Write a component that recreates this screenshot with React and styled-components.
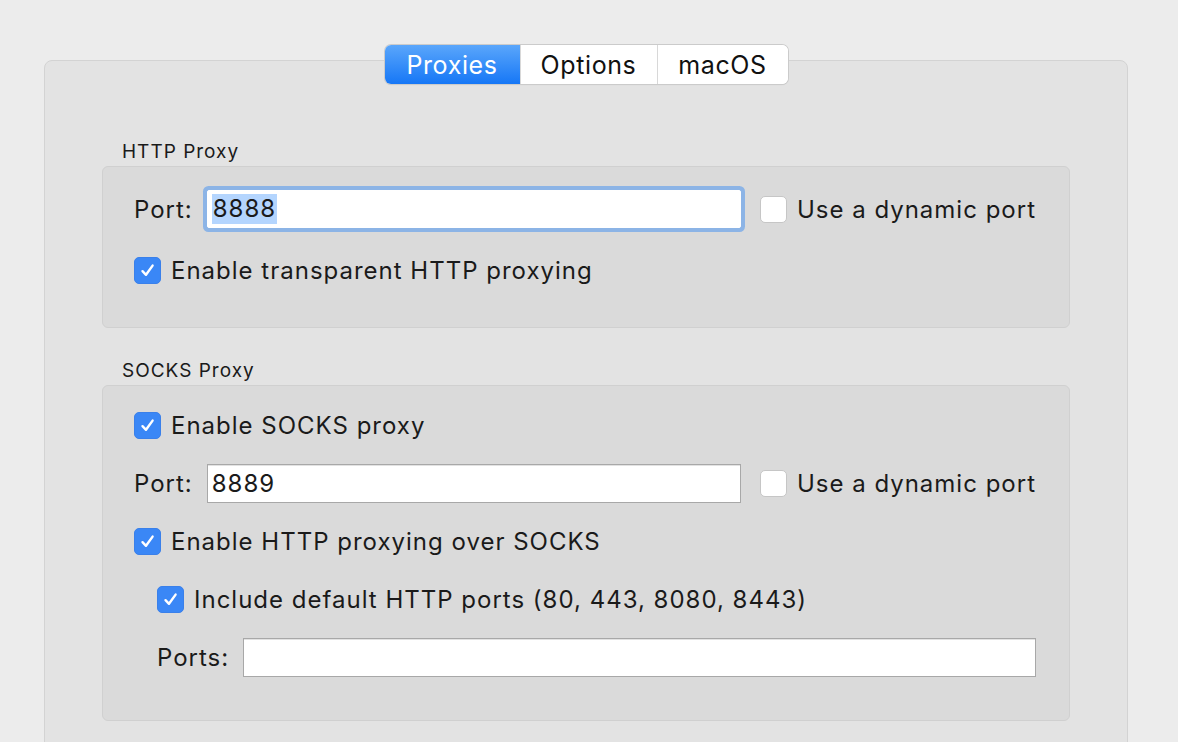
import styled, { createGlobalStyle } from "styled-components";

const GlobalStyle = createGlobalStyle`
  html, body {
    margin: 0;
    padding: 0;
    background: #ececec;
    font-family: Inter, "Noto Sans", "Liberation Sans", sans-serif;
    color: #1a1a1a;
  }
`;

const Page = styled.div`
  width: 1178px;
  height: 742px;
  overflow: hidden;
  padding: 45px 50px 0 44px;
  box-sizing: border-box;
`;

const TabBar = styled.div`
  display: flex;
  justify-content: center;
  width: 1084px;
  position: relative;
  z-index: 1;
  margin-bottom: -24px;
`;

const Segments = styled.div`
  display: flex;
  height: 39px;
  border-radius: 6px;
  background: #fff;
  box-shadow: 0 0 0 1px #cbcbcb, 0 1px 1px rgba(0, 0, 0, 0.12);
  overflow: hidden;
`;

const Segment = styled.div`
  display: flex;
  align-items: center;
  justify-content: center;
  width: ${(p) => p.$w}px;
  font-size: 25px;
  letter-spacing: 0.6px;
  color: ${(p) => (p.$active ? "#fff" : "#111")};
  background: ${(p) =>
    p.$active ? "linear-gradient(#5aa6fb, #1677f6)" : "#fff"};
  & + & {
    border-left: 1px solid #d8d8d8;
  }
`;

const Panel = styled.div`
  width: 1084px;
  height: 720px;
  box-sizing: border-box;
  background: #e3e3e3;
  border: 1px solid #d3d3d3;
  border-radius: 8px;
  padding: 79px 57px 0 57px;
`;

const SectionLabel = styled.div`
  font-size: 19px;
  letter-spacing: 1px;
  line-height: 24px;
  padding-left: 20px;
  margin-bottom: 2px;
`;

const GroupBox = styled.div`
  display: flex;
  flex-direction: column;
  gap: ${(p) => p.$gap}px;
  background: #dadada;
  border: 1px solid #d0d0d0;
  border-radius: 6px;
  padding: ${(p) => p.$top}px 33px ${(p) => p.$bottom}px 31px;
  margin-bottom: ${(p) => p.$mb || 0}px;
`;

const Row = styled.div`
  display: flex;
  align-items: center;
  height: 40px;
  padding-left: ${(p) => p.$indent || 0}px;
`;

const FieldLabel = styled.span`
  font-size: 24px;
  letter-spacing: 1px;
  margin-right: ${(p) => p.$gap}px;
  white-space: nowrap;
`;

const TextField = styled.div`
  flex: 1;
  height: ${(p) => (p.$focused ? 38 : 39)}px;
  box-sizing: border-box;
  background: #fff;
  border: 1px solid ${(p) => (p.$focused ? "#fff" : "#a8a8a8")};
  border-radius: ${(p) => (p.$focused ? "2px" : "0")};
  box-shadow: ${(p) =>
    p.$focused ? "0 0 0 4px #8cb4e6" : "inset 0 1px 0 #e2e2e2"};
  display: flex;
  align-items: center;
  padding-left: 4px;
  font-size: 24px;
  letter-spacing: 1px;
`;

const Selected = styled.span`
  background: #b4d5fe;
  padding: 0 1px;
  line-height: 30px;
`;

const CheckRow = styled.label`
  display: flex;
  align-items: center;
  font-size: 24px;
  letter-spacing: 1px;
  white-space: nowrap;
  margin-left: ${(p) => p.$ml || 0}px;
`;

const Box = styled.span`
  width: 27px;
  height: 27px;
  box-sizing: border-box;
  border-radius: 5px;
  margin-right: 10px;
  display: flex;
  align-items: center;
  justify-content: center;
  background: ${(p) => (p.$checked ? "#3a87f6" : "#fff")};
  border: 1px solid ${(p) => (p.$checked ? "#3a80ea" : "#c6c6c6")};
`;

function Check({ checked, children, ml }) {
  return (
    <CheckRow $ml={ml}>
      <Box $checked={checked}>
        {checked && (
          <svg width="17" height="17" viewBox="0 0 17 17">
            <path
              d="M3.5 9.2 L7 12.8 L13.6 3.6"
              fill="none"
              stroke="#fff"
              strokeWidth="2.4"
              strokeLinecap="round"
              strokeLinejoin="round"
            />
          </svg>
        )}
      </Box>
      {children}
    </CheckRow>
  );
}

export default function App() {
  return (
    <>
      <GlobalStyle />
      <Page>
        <TabBar>
          <Segments>
            <Segment $active $w={135}>Proxies</Segment>
            <Segment $w={136}>Options</Segment>
            <Segment $w={130}>macOS</Segment>
          </Segments>
        </TabBar>
        <Panel>
          <SectionLabel>HTTP Proxy</SectionLabel>
          <GroupBox $top={22} $bottom={37} $gap={21} $mb={31}>
            <Row>
              <FieldLabel $gap={14}>Port:</FieldLabel>
              <TextField $focused>
                <Selected>8888</Selected>
              </TextField>
              <Check ml={19}>Use a dynamic port</Check>
            </Row>
            <Row>
              <Check checked>Enable transparent HTTP proxying</Check>
            </Row>
          </GroupBox>

          <SectionLabel>SOCKS Proxy</SectionLabel>
          <GroupBox $top={19} $bottom={43} $gap={18}>
            <Row>
              <Check checked>Enable SOCKS proxy</Check>
            </Row>
            <Row>
              <FieldLabel $gap={14}>Port:</FieldLabel>
              <TextField>8889</TextField>
              <Check ml={19}>Use a dynamic port</Check>
            </Row>
            <Row>
              <Check checked>Enable HTTP proxying over SOCKS</Check>
            </Row>
            <Row $indent={23}>
              <Check checked>Include default HTTP ports (80, 443, 8080, 8443)</Check>
            </Row>
            <Row $indent={23}>
              <FieldLabel $gap={14}>Ports:</FieldLabel>
              <TextField />
            </Row>
          </GroupBox>
        </Panel>
      </Page>
    </>
  );
}
